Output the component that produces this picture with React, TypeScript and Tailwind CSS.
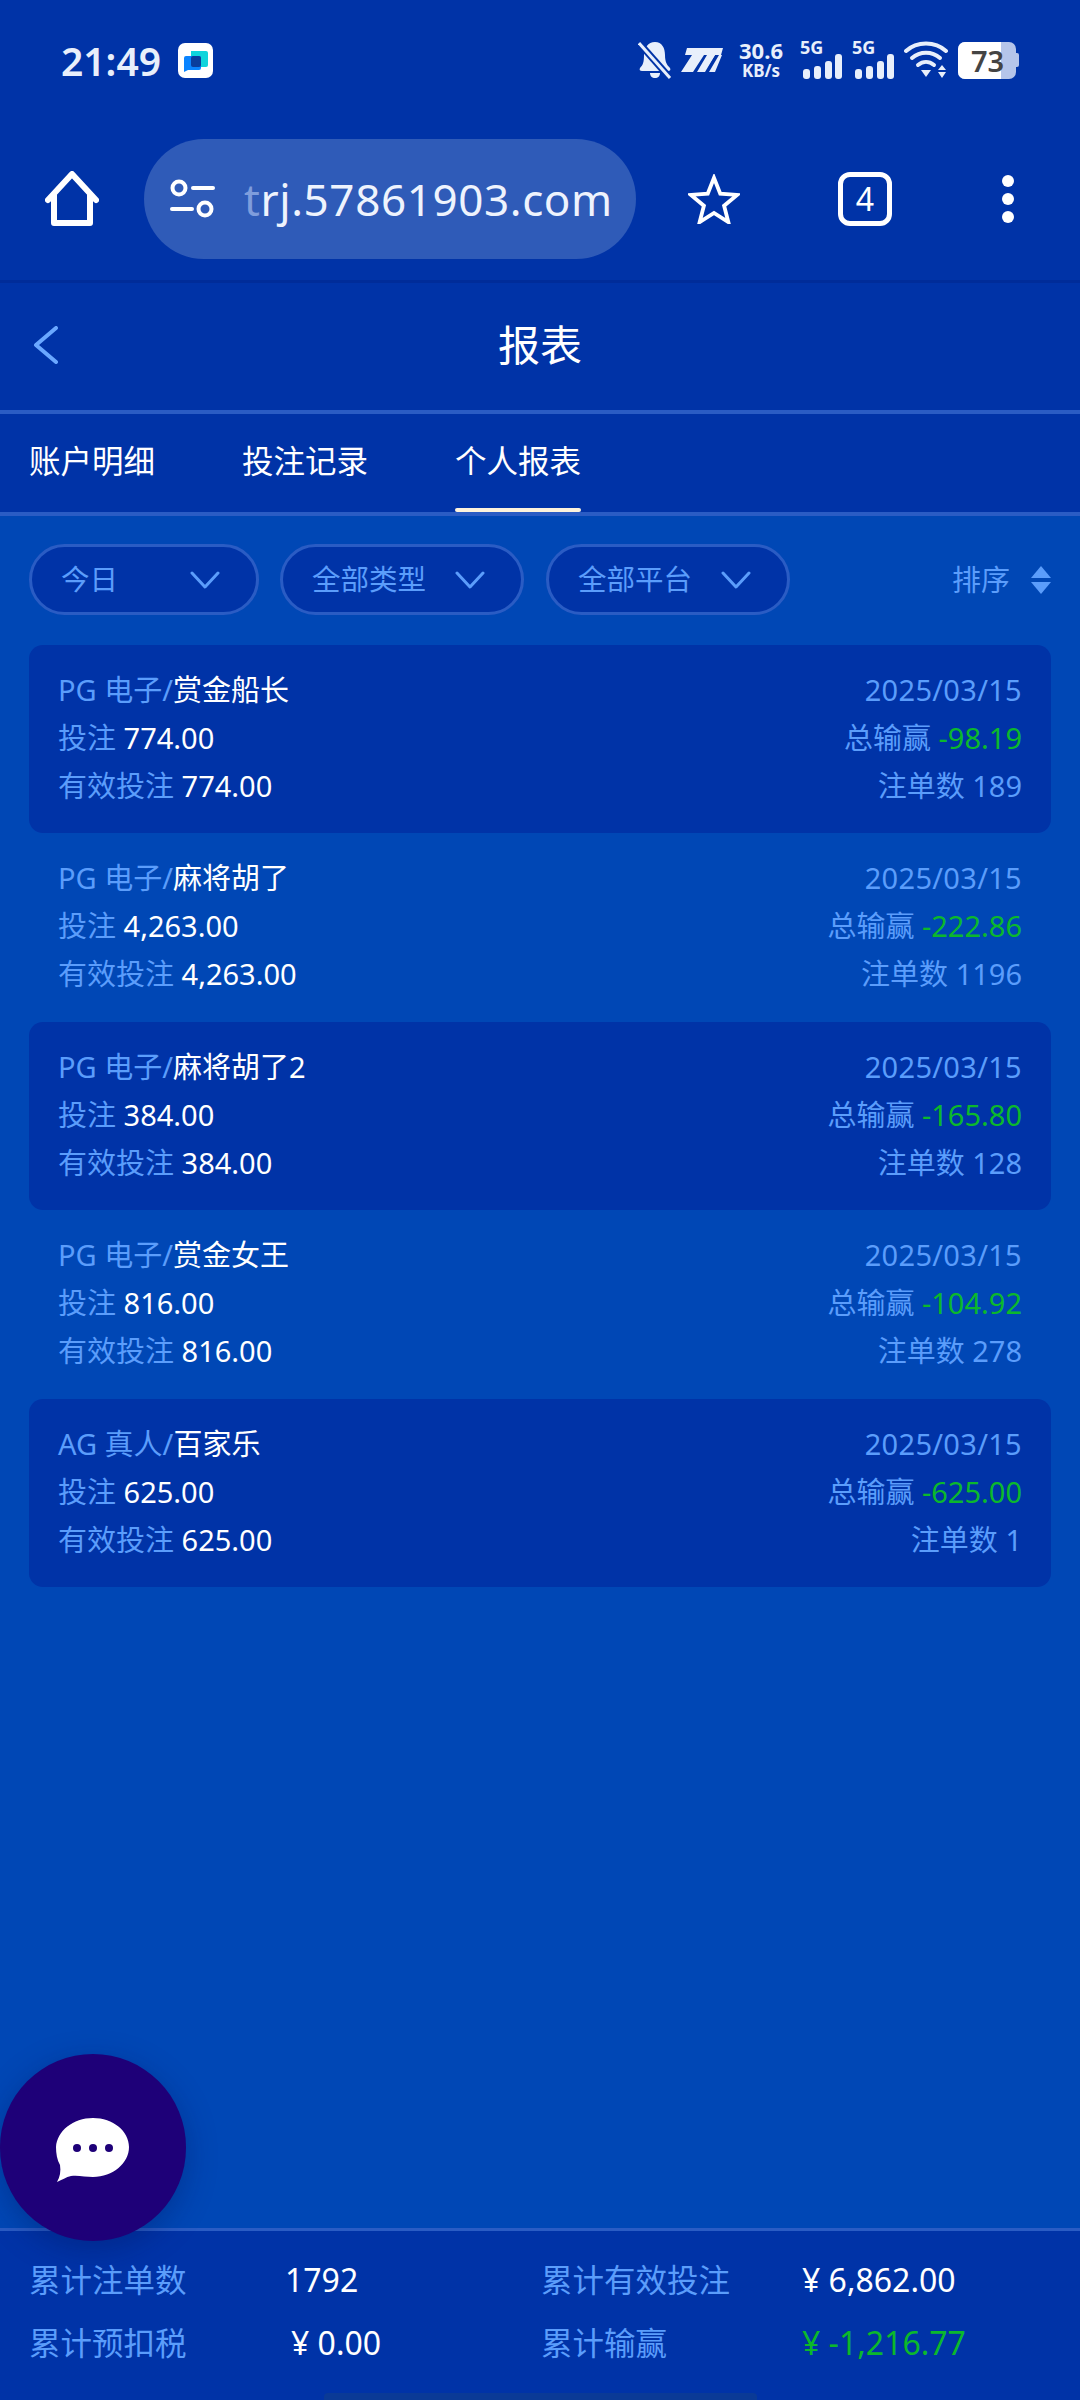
import React from 'react'

const FONT = '"Noto Sans", "Noto Sans CJK SC", sans-serif'

const rows = [
  { cat: 'PG 电子/', name: '赏金船长', bet: '774.00', win: '-98.19', count: '189', dark: true },
  { cat: 'PG 电子/', name: '麻将胡了', bet: '4,263.00', win: '-222.86', count: '1196', dark: false },
  { cat: 'PG 电子/', name: '麻将胡了2', bet: '384.00', win: '-165.80', count: '128', dark: true },
  { cat: 'PG 电子/', name: '赏金女王', bet: '816.00', win: '-104.92', count: '278', dark: false },
  { cat: 'AG 真人/', name: '百家乐', bet: '625.00', win: '-625.00', count: '1', dark: true },
]

const Chevron = () => (
  <svg width="30" height="18" viewBox="0 0 30 18" fill="none" stroke="#5b9dfb" strokeWidth="3" strokeLinecap="round" strokeLinejoin="round">
    <path d="M2 2l13 14L28 2" />
  </svg>
)

const Filter = ({ label, width, gap }: { label: string; width: string; gap: string }) => (
  <div className={`${width} h-[71px] rounded-full border-[3px] border-[#2a5cc4] bg-[#0033a7] pl-[29px] flex items-center`}>
    <span className="text-[28.5px] text-[#5b9dfb] leading-none">{label}</span>
    <span className={gap}>
      <Chevron />
    </span>
  </div>
)

const Signal = () => (
  <div className="relative w-[42px] h-[38px]">
    <span className="absolute left-0 top-[-4px] text-[18px] font-bold leading-[20px] text-[#e8effb]">5G</span>
    <svg className="absolute left-0 bottom-0" width="42" height="25" viewBox="0 0 42 25" fill="#e8effb">
      <rect x="3" y="15" width="7" height="10" rx="3" />
      <rect x="14" y="12" width="7" height="13" rx="3" />
      <rect x="25" y="7" width="7" height="18" rx="3" />
      <rect x="35" y="0" width="7" height="25" rx="3" />
    </svg>
  </div>
)

const StatusBar = () => (
  <div className="h-[120px] flex items-center justify-between pl-[61px] pr-[61px]">
    <div className="flex items-center gap-[17px]">
      <span className="text-[39px] font-semibold text-[#e8effb] leading-none">21:49</span>
      <svg width="35" height="35" viewBox="0 0 35 35">
        <rect width="35" height="35" rx="7" fill="#fff" />
        <path d="M13 8h15a2 2 0 0 1 2 2v12a2 2 0 0 1-2 2h-15z" fill="#0fd4dc" />
        <path d="M6 15a2 2 0 0 1 2-2h13a2 2 0 0 1 2 2v10a2 2 0 0 1-2 2H10l-4 2z" fill="#0a84ff" />
        <rect x="13" y="13" width="10" height="11" rx="2" fill="#0a3d9c" />
      </svg>
    </div>
    <div className="flex items-center">
      <svg width="34" height="38" viewBox="0 0 34 38" className="mr-[9px]">
        <path d="M17 1c7 0 10 6 10 13 0 7 2 10 5 13 1 2 0 3-2 3H4c-2 0-3-1-2-3 3-3 4-6 4-13C6 7 10 1 17 1z" fill="#e8effb" />
        <path d="M12 32h10c0 3-2 5-5 5s-5-2-5-5z" fill="#e8effb" />
        <path d="M2 3l30 34" stroke="#0033a7" strokeWidth="7" />
        <path d="M1 2l31 35" stroke="#e8effb" strokeWidth="3" />
      </svg>
      <svg width="42" height="26" viewBox="0 0 42 26" fill="#e8effb" className="mr-[13px]">
        <path d="M6 1h36l-2 7h-6l-11 17h-7l10-17h-3L12 25H0L11 8H4z" />
        <path d="M28 8h6L24 25h-6zM38 8h3l-7 17h-6z" />
      </svg>
      <div className="w-[50px] flex flex-col items-center text-[#e8effb] font-bold mr-[14px]">
        <span className="text-[22px] leading-[21px]">30.6</span>
        <span className="text-[17px] leading-[19px]">KB/s</span>
      </div>
      <div className="mr-[10px]">
        <Signal />
      </div>
      <div className="mr-[10px]">
        <Signal />
      </div>
      <svg width="44" height="38" viewBox="0 0 44 38" fill="none" className="mr-[10px]">
        <path d="M2 10c11-10 29-10 40 0" stroke="#e8effb" strokeWidth="4" strokeLinecap="round" />
        <path d="M8 17c8-7 20-7 28 0" stroke="#e8effb" strokeWidth="4" strokeLinecap="round" />
        <path d="M14 24c5-4 11-4 16 0" stroke="#e8effb" strokeWidth="4" strokeLinecap="round" />
        <path d="M17 29h10l-5 7z" fill="#e8effb" />
        <path d="M38 24l4 5h-8zM38 37l4-6h-8z" fill="#e8effb" />
      </svg>
      <div className="flex items-center">
        <div className="relative w-[58px] h-[37px] rounded-[7px] bg-[#b5c5ea] overflow-hidden">
          <div className="absolute left-0 top-0 h-full w-[43px] bg-white" />
          <span className="absolute left-[13px] top-0 text-[29px] font-semibold leading-[37px] text-[#444]">73</span>
        </div>
        <div className="w-[3px] h-[14px] rounded-r-[2px] bg-[#b5c5ea]" />
      </div>
    </div>
  </div>
)

const Toolbar = () => (
  <div className="h-[160px] flex items-center pl-[45px] pb-[3px]">
    <svg width="54" height="56" viewBox="0 0 54 56" fill="none" stroke="#fff" strokeWidth="6" strokeLinejoin="round" strokeLinecap="round">
      <path d="M3 29L27 3l24 26" />
      <path d="M9 24v28h36V24" />
    </svg>
    <div className="ml-[45px] w-[492px] h-[120px] rounded-full bg-[#2f5bb8] flex items-center pl-[25px]">
      <svg width="46" height="40" viewBox="0 0 46 40" fill="none" stroke="#fff" strokeWidth="4" strokeLinecap="round">
        <circle cx="10" cy="9" r="6.5" />
        <path d="M24 9h20" />
        <path d="M3 30h20" />
        <circle cx="36" cy="30" r="6.5" />
      </svg>
      <span className="ml-[29px] text-[44px] leading-none text-[#eef3fd] tracking-[0.6px]">
        <span className="text-[#7f9ddc]">t</span>rj.57861903.com
      </span>
    </div>
    <svg width="52" height="50" viewBox="0 0 54 52" fill="none" stroke="#fff" strokeWidth="4" className="ml-[52px]">
      <path d="M27 4l6.5 16.5 17.5 1.2-13.5 11.3 4.4 17L27 40.5 12.1 50l4.4-17L3 21.7l17.5-1.2z" />
    </svg>
    <div className="ml-[98px] w-[54px] h-[54px] rounded-[12px] border-[5px] border-white flex items-center justify-center text-[32px] text-white leading-none">
      4
    </div>
    <div className="ml-[110px] flex flex-col gap-[6px]">
      <span className="w-[12px] h-[12px] rounded-full bg-white" />
      <span className="w-[12px] h-[12px] rounded-full bg-white" />
      <span className="w-[12px] h-[12px] rounded-full bg-white" />
    </div>
  </div>
)

const ReportRow = ({ cat, name, bet, win, count, dark }: (typeof rows)[number]) => (
  <div className={`h-[188.4px] rounded-[14px] pl-[29px] pr-[29px] pt-[21px] flex justify-between text-[29px] leading-[48px] text-[#5b9dfb] ${dark ? 'bg-[#0033a7]' : ''}`}>
    <div>
      <div>
        {cat}
        <span className="text-white">{name}</span>
      </div>
      <div>
        投注 <span className="text-white">{bet}</span>
      </div>
      <div>
        有效投注 <span className="text-white">{bet}</span>
      </div>
    </div>
    <div className="text-right">
      <div className="tracking-[0.3px]">2025/03/15</div>
      <div>
        总输赢 <span className="text-[#0cb82c]">{win}</span>
      </div>
      <div>注单数 {count}</div>
    </div>
  </div>
)

export default function App() {
  return (
    <div className="relative w-[1080px] h-[2400px] overflow-hidden flex flex-col bg-[#0047b5]" style={{ fontFamily: FONT }}>
      <div className="bg-[#0033a7]">
        <StatusBar />
        <Toolbar />
      </div>

      {/* 标题栏 */}
      <div className="h-[134px] flex-shrink-0 relative flex items-center justify-center bg-[#0033a7] border-t-[3px] border-[#002c99] border-b-[4px] border-b-[#2a5cc4]">
        <svg width="26" height="38" viewBox="0 0 26 38" fill="none" stroke="#6aa8ff" strokeWidth="4" strokeLinecap="round" strokeLinejoin="round" className="absolute left-[33px] top-[43px]">
          <path d="M23 2L3 19l20 17" />
        </svg>
        <span className="text-[42px] text-white leading-none mb-[3px]">报表</span>
      </div>

      {/* tab 切换 */}
      <div className="h-[102px] flex-shrink-0 flex items-stretch gap-[87px] pl-[29px] bg-[#0033a7] border-b-[4px] border-[#2a5cc4]">
        <div className="flex items-center text-[31.5px] text-white pb-[4px]">账户明细</div>
        <div className="flex items-center text-[31.5px] text-white pb-[4px]">投注记录</div>
        <div className="relative flex items-center text-[31.5px] text-white pb-[4px]">
          个人报表
          <span className="absolute left-0 right-0 bottom-0 h-[4px] rounded-full bg-[#fdf3dc]" />
        </div>
      </div>

      {/* 筛选 */}
      <div className="h-[129px] flex-shrink-0 flex items-center pl-[29px] pr-[29px] pb-[2px]">
        <Filter label="今日" width="w-[230px]" gap="ml-[72px]" />
        <div className="w-[21px]" />
        <Filter label="全部类型" width="w-[244px]" gap="ml-[29px]" />
        <div className="w-[22px]" />
        <Filter label="全部平台" width="w-[244px]" gap="ml-[29px]" />
        <div className="flex-1" />
        <span className="text-[29px] text-[#5b9dfb] leading-none">排序</span>
        <svg width="20" height="28" viewBox="0 0 20 28" fill="#5b9dfb" className="ml-[21px]">
          <path d="M10 0l10 12H0z" />
          <path d="M0 16h20L10 28z" />
        </svg>
      </div>

      {/* 报表列表 */}
      <div className="flex-1 pl-[29px] pr-[29px]">
        {rows.map((row) => (
          <ReportRow key={row.name} {...row} />
        ))}
      </div>

      {/* 底部汇总 */}
      <div className="h-[172px] flex-shrink-0 bg-[#0033a7] border-t-[3px] border-[#2a5cc4] pl-[29px] pt-[17px] text-[32px] leading-[63px]">
        <div className="flex">
          <span className="w-[256px] text-[31.5px] text-[#5b9dfb]">累计注单数</span>
          <span className="w-[256px] text-white">1792</span>
          <span className="w-[261px] text-[31.5px] text-[#5b9dfb]">累计有效投注</span>
          <span className="text-white">¥ 6,862.00</span>
        </div>
        <div className="flex">
          <span className="w-[262px] text-[31.5px] text-[#5b9dfb]">累计预扣税</span>
          <span className="w-[250px] text-white">¥ 0.00</span>
          <span className="w-[261px] text-[31.5px] text-[#5b9dfb]">累计输赢</span>
          <span className="text-[#0cb82c]">¥ -1,216.77</span>
        </div>
      </div>

      {/* 悬浮客服按钮 */}
      <div className="absolute left-0 top-[2054px] w-[186px] h-[187px] rounded-full bg-[#1e0078] shadow-[0_8px_30px_rgba(0,20,90,0.35)] flex items-center justify-center">
        <svg width="74" height="66" viewBox="0 0 74 66" className="mt-[5px]">
          <path d="M37 1c20 0 36 13 36 29S57 60 37 60c-7 0-15-2-22-1-5 1-9 4-14 6 3-5 4-11 3-17C1 43 0 36 0 30 1 14 17 1 37 1z" fill="#fff" />
          <circle cx="21" cy="31" r="4" fill="#1e0078" />
          <circle cx="37" cy="31" r="4" fill="#1e0078" />
          <circle cx="53" cy="31" r="4" fill="#1e0078" />
        </svg>
      </div>

      {/* 手势条 */}
      <div className="absolute left-[324px] bottom-0 w-[433px] h-[7px] rounded-t-[4px] bg-[#0a3a96]" />
    </div>
  )
}
